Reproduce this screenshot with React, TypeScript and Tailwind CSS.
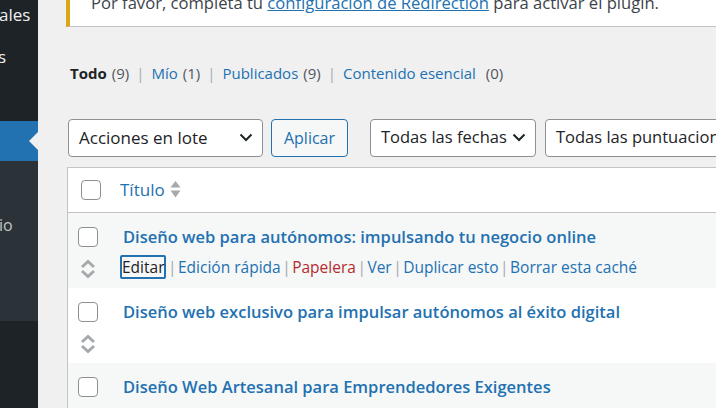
import React from "react";

const font = { fontFamily: '"Open Sans", "Noto Sans", sans-serif' };

const Chevron = () => (
  <svg width="14" height="9" viewBox="0 0 14 9" fill="none">
    <path d="M1.5 1.5 L7 7 L12.5 1.5" stroke="#1d2327" strokeWidth="2" />
  </svg>
);

const Handle = () => (
  <svg width="18" height="20" viewBox="0 0 18 20" fill="none">
    <path d="M3 8 L9 2.5 L15 8" stroke="#a7aaad" strokeWidth="3" strokeLinejoin="miter" />
    <path d="M3 12 L9 17.5 L15 12" stroke="#a7aaad" strokeWidth="3" strokeLinejoin="miter" />
  </svg>
);

const SortArrows = () => (
  <svg width="11" height="19" viewBox="0 0 11 19">
    <path d="M0.5 7.5 L5.5 1 L10.5 7.5 Z" fill="#a7aaad" />
    <path d="M0.5 10.5 L5.5 17.5 L10.5 10.5 Z" fill="#a7aaad" />
  </svg>
);

const Check = () => (
  <div className="w-[20px] h-[20px] rounded-[4px] border-[1.5px] border-[#8c8f94] bg-white" />
);

const Sep = () => <span className="text-[#a7aaad] mx-[7px]">|</span>;
const ActSep = () => <span className="text-[#a7aaad] mx-[1.5px]">|</span>;

type Row = { title: string; bg: string; actions?: boolean; handle?: boolean };

const rows: Row[] = [
  { title: "Diseño web para autónomos: impulsando tu negocio online", bg: "bg-[#f6f7f7]", actions: true, handle: true },
  { title: "Diseño web exclusivo para impulsar autónomos al éxito digital", bg: "bg-white", handle: true },
  { title: "Diseño Web Artesanal para Emprendedores Exigentes", bg: "bg-[#f6f7f7]" },
];

export default function App() {
  return (
    <div className="flex w-[716px] h-[408px] overflow-hidden bg-[#f0f0f1]" style={font}>
      {/* sidebar */}
      <div className="w-[38px] shrink-0 flex flex-col bg-[#1d2327] text-[#f0f0f1] text-[17px] overflow-hidden">
        <div className="h-[30px] flex items-center whitespace-nowrap -ml-[1px]">ales</div>
        <div className="h-[54px] flex items-center whitespace-nowrap -ml-[2px]">s</div>
        <div className="h-[37px]" />
        <div className="h-[40px] bg-[#2271b1] flex items-center justify-end">
          <div className="w-0 h-0 border-y-[9px] border-y-transparent border-r-[9px] border-r-[#f0f0f1]" />
        </div>
        <div className="h-[160px] bg-[#2c3338] flex flex-col">
          <div className="h-[46px]" />
          <div className="h-[36px] flex items-center whitespace-nowrap text-[#c3c4c7] text-[16px] -ml-[1px]">io</div>
        </div>
        <div className="flex-1" />
      </div>

      {/* main */}
      <div className="flex-1 flex flex-col pl-[28px] min-w-0">
        <div className="h-[27px] shrink-0 bg-white border-l-[4px] border-[#dba617] border-b border-b-[#c3c4c7] overflow-hidden">
          <p className="-mt-[8px] pl-[21px] text-[16.6px] leading-[22px] text-[#3c434a] whitespace-nowrap">
            Por favor, completa tu <span className="text-[#2271b1] underline">configuración de Redirection</span> para activar el plugin.
          </p>
        </div>

        <div className="mt-[35px] h-[24px] flex items-center pl-[4px] text-[15px] whitespace-nowrap">
          <span className="font-bold text-[#1d2327]">Todo</span>
          <span className="text-[#50575e] ml-[5px]">(9)</span>
          <Sep />
          <span className="text-[#2271b1]">Mío</span>
          <span className="text-[#50575e] ml-[5px]">(1)</span>
          <Sep />
          <span className="text-[#2271b1]">Publicados</span>
          <span className="text-[#50575e] ml-[5px]">(9)</span>
          <Sep />
          <span className="text-[#2271b1]">Contenido esencial</span>
          <span className="text-[#50575e] ml-[10px]">(0)</span>
        </div>

        <div className="mt-[34px] h-[38px] shrink-0 flex items-center whitespace-nowrap text-[17px]">
          <div className="ml-[2px] w-[195px] shrink-0 h-[38px] bg-white border border-[#8c8f94] rounded-[4px] flex items-center justify-between pl-[10px] pr-[9px] text-[#1d2327]">
            <span>Acciones en lote</span>
            <Chevron />
          </div>
          <div className="ml-[8px] w-[77px] shrink-0 h-[38px] border border-[#2271b1] rounded-[4px] bg-[#f6f7f7] flex items-center justify-center text-[#2271b1] text-[16px]">
            Aplicar
          </div>
          <div className="ml-[22px] w-[166px] shrink-0 h-[38px] bg-white border border-[#8c8f94] rounded-[4px] flex items-center justify-between pl-[10px] pr-[9px] text-[#1d2327] overflow-hidden">
            <span className="text-[16.5px]">Todas las fechas</span>
            <Chevron />
          </div>
          <div className="ml-[9px] w-[220px] h-[38px] shrink-0 bg-white border border-[#8c8f94] rounded-[4px] flex items-center pl-[10px] text-[#1d2327] overflow-hidden">
            <span className="text-[16.5px]">Todas las puntuaciones</span>
          </div>
        </div>

        {/* table */}
        <div className="mt-[10px] ml-[1px] border-l border-t border-[#c3c4c7] bg-white flex flex-col">
          <div className="h-[45px] flex items-center border-b border-[#c3c4c7] pl-[13px]">
            <Check />
            <span className="ml-[19px] text-[17px] text-[#2271b1]">Título</span>
            <span className="ml-[5px] flex items-center"><SortArrows /></span>
          </div>
          {rows.map((r, i) => (
            <div key={i} className={`h-[75px] flex ${r.bg}`}>
              <div className="w-[54px] shrink-0 flex flex-col items-center pt-[14px] pl-[1px] -ml-[1px]">
                <div className="-ml-[14px]"><Check /></div>
                {r.handle && <div className="mt-[12px] -ml-[14px]"><Handle /></div>}
              </div>
              <div className="flex flex-col pt-[12px] whitespace-nowrap">
                <div className="text-[16.5px] leading-[24px] font-semibold text-[#2271b1] ml-[2px]">{r.title}</div>
                {r.actions && (
                  <div className="mt-[6px] flex items-center text-[15.5px] leading-[20px] whitespace-nowrap">
                    <span className="border-2 border-[#2271b1] text-[#1d2327] rounded-[2px] -ml-[1px]">Editar</span>
                    <ActSep />
                    <span className="text-[#2271b1]">Edición rápida</span>
                    <ActSep />
                    <span className="text-[#b32d2e]">Papelera</span>
                    <ActSep />
                    <span className="text-[#2271b1]">Ver</span>
                    <ActSep />
                    <span className="text-[#2271b1]">Duplicar esto</span>
                    <ActSep />
                    <span className="text-[#2271b1]">Borrar esta caché</span>
                  </div>
                )}
              </div>
            </div>
          ))}
        </div>
      </div>
    </div>
  );
}
